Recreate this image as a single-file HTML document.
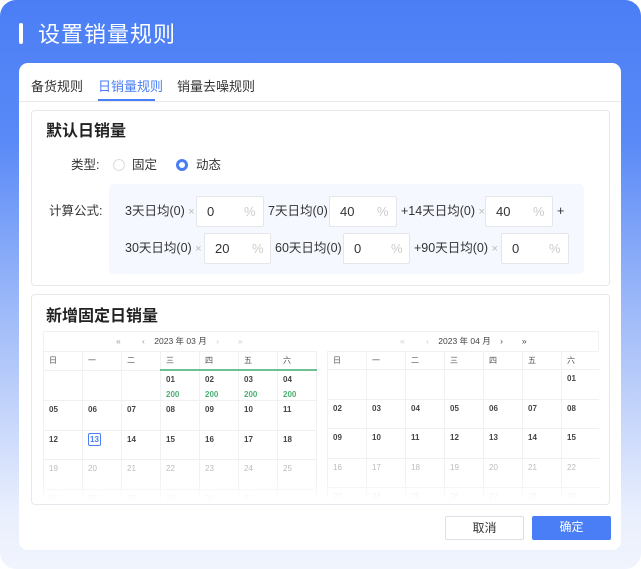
<!DOCTYPE html>
<html><head><meta charset="utf-8"><style>
*{margin:0;padding:0;box-sizing:border-box}
body{width:641px;height:569px;overflow:hidden;font-family:"Liberation Sans","Noto Sans CJK SC",sans-serif;background:#fff;position:relative}
.bg{position:absolute;left:0;top:0;width:641px;height:569px;border-radius:16px;background:linear-gradient(180deg,#4b7ef6 0%,#5a8af7 25%,#9fbaf9 55%,#e9effd 90%,#f1f4fd 100%)}
.abs{position:absolute}
.card{left:19px;top:63px;width:602px;height:487px;background:#fff;border-radius:9px}
.title{left:38px;top:21px;color:#fff;font-size:22px;letter-spacing:1px;line-height:28px}
.bar{left:19px;top:23px;width:4px;height:21px;background:#fff;border-radius:2px}
.tab{top:79px;font-size:13px;color:#333;line-height:16px}
.box{border:1px solid #e6e8ee;border-radius:4px;background:#fff}
.h{font-size:16px;font-weight:bold;color:#222;line-height:20px}
.t{font-size:12.5px;color:#333;white-space:nowrap;line-height:14px}
.inp{background:#fff;border:1px solid #e4e6eb;border-radius:2px;height:31px;font-size:13px;color:#333;line-height:15px}
.inp span{position:absolute;top:7px}
.x{color:#bbb;font-size:11px}
table{border-collapse:collapse;table-layout:fixed;position:absolute}
td{box-sizing:content-box;border:1px solid #f0f1f5;vertical-align:top;font-size:8px;line-height:10px;font-weight:bold;color:#444;padding:4px 5px 0;width:28px}
tr.w td{height:13px;font-weight:normal;color:#555}
tr.r td{height:24.5px}
tr.g td{color:#bbb;font-weight:normal}
tr.f td{color:#ddd;font-weight:normal}
.gr{color:#4caf73;display:block;margin-top:5px}
.hd{font-size:8.5px;color:#444;line-height:10px}
.btn{top:516px;width:79px;height:24px;border-radius:2px;font-size:12px;text-align:center;line-height:23px}
</style></head><body>
<div class="bg"></div>
<div class="abs bar"></div>
<div class="abs title">设置销量规则</div>
<div class="abs card"></div>
<div class="abs tab" style="left:31px">备货规则</div>
<div class="abs tab" style="left:98px;color:#4a7ef6">日销量规则</div>
<div class="abs tab" style="left:177px">销量去噪规则</div>
<div class="abs" style="left:19px;top:101px;width:602px;height:1px;background:#e8e9ee"></div>
<div class="abs" style="left:98px;top:99px;width:57px;height:2px;background:#4a7ef6"></div>

<div class="abs box" style="left:31px;top:110px;width:579px;height:176px"></div>
<div class="abs h" style="left:46px;top:122px">默认日销量</div>
<div class="abs t" style="left:71px;top:158px">类型:</div>
<div class="abs" style="left:113px;top:159px;width:12px;height:12px;border:1px solid #ddd;border-radius:50%"></div>
<div class="abs t" style="left:132px;top:158px">固定</div>
<div class="abs" style="left:176px;top:159px;width:12px;height:12px;border:3.5px solid #4a7ef6;border-radius:50%;background:#fff"></div>
<div class="abs t" style="left:196px;top:158px">动态</div>
<div class="abs t" style="left:49px;top:204px">计算公式:</div>
<div class="abs" style="left:109px;top:184px;width:475px;height:90px;background:#f5f8fe;border-radius:4px"></div>

<div class="abs t" style="left:125px;top:204px">3天日均(0) <span class="x">×</span></div>
<div class="abs inp" style="left:196px;top:196px;width:68px"><span style="left:10px">0</span><span style="left:47px;color:#ccc">%</span></div>
<div class="abs t" style="left:268px;top:204px">7天日均(0)</div>
<div class="abs inp" style="left:329px;top:196px;width:68px"><span style="left:10px">40</span><span style="left:47px;color:#ccc">%</span></div>
<div class="abs t" style="left:401px;top:204px">+14天日均(0) <span class="x">×</span></div>
<div class="abs inp" style="left:485px;top:196px;width:68px"><span style="left:10px">40</span><span style="left:47px;color:#ccc">%</span></div>
<div class="abs t" style="left:557px;top:204px">+</div>

<div class="abs t" style="left:125px;top:241px">30天日均(0) <span class="x">×</span></div>
<div class="abs inp" style="left:204px;top:233px;width:67px"><span style="left:10px">20</span><span style="left:47px;color:#ccc">%</span></div>
<div class="abs t" style="left:275px;top:241px">60天日均(0) <span class="x">×</span></div>
<div class="abs inp" style="left:343px;top:233px;width:67px"><span style="left:10px">0</span><span style="left:47px;color:#ccc">%</span></div>
<div class="abs t" style="left:414px;top:241px">+90天日均(0) <span class="x">×</span></div>
<div class="abs inp" style="left:501px;top:233px;width:68px"><span style="left:10px">0</span><span style="left:47px;color:#ccc">%</span></div>

<div class="abs box" style="left:31px;top:294px;width:579px;height:211px"></div>
<div class="abs h" style="left:46px;top:307px">新增固定日销量</div>
<div class="abs" style="left:43px;top:331px;width:556px;height:20px;border:1px solid #f0f1f5;border-bottom:none"></div>
<div class="abs hd" style="left:116px;top:336px;color:#999">«&nbsp;&nbsp;&nbsp;&nbsp;&nbsp;&nbsp;&nbsp;&nbsp;&nbsp;‹&nbsp;&nbsp;&nbsp;&nbsp;<span style="color:#444">2023 年 03 月</span>&nbsp;&nbsp;&nbsp;&nbsp;<span style="color:#ccc">›&nbsp;&nbsp;&nbsp;&nbsp;&nbsp;&nbsp;&nbsp;&nbsp;»</span></div>
<div class="abs hd" style="left:400px;top:336px;color:#ccc">«&nbsp;&nbsp;&nbsp;&nbsp;&nbsp;&nbsp;&nbsp;&nbsp;&nbsp;‹&nbsp;&nbsp;&nbsp;&nbsp;<span style="color:#444">2023 年 04 月</span>&nbsp;&nbsp;&nbsp;&nbsp;<span style="color:#444">›&nbsp;&nbsp;&nbsp;&nbsp;&nbsp;&nbsp;&nbsp;&nbsp;»</span></div>

<div class="abs" style="left:43px;top:351px;width:556px;height:150px;overflow:hidden">
<table style="left:0;top:0;width:271px">
<tr class="w"><td>日</td><td>一</td><td>二</td><td>三</td><td>四</td><td>五</td><td>六</td></tr>
<tr class="r"><td></td><td></td><td></td><td style="border-top:2px solid #6cc093">01<span class="gr">200</span></td><td style="border-top:2px solid #6cc093">02<span class="gr">200</span></td><td style="border-top:2px solid #6cc093">03<span class="gr">200</span></td><td style="border-top:2px solid #6cc093">04<span class="gr">200</span></td></tr>
<tr class="r"><td>05</td><td>06</td><td>07</td><td>08</td><td>09</td><td>10</td><td>11</td></tr>
<tr class="r"><td>12</td><td><span style="color:#4a7ef6;border:1px solid #4a7ef6;border-radius:2px;padding:1px 1px">13</span></td><td>14</td><td>15</td><td>16</td><td>17</td><td>18</td></tr>
<tr class="r g"><td>19</td><td>20</td><td>21</td><td>22</td><td>23</td><td>24</td><td>25</td></tr>
<tr class="r f"><td>26</td><td>27</td><td>28</td><td>29</td><td>30</td><td>31</td><td></td></tr>
</table>
<table style="left:284px;top:0;width:272px">
<tr class="w"><td>日</td><td>一</td><td>二</td><td>三</td><td>四</td><td>五</td><td>六</td></tr>
<tr class="r"><td></td><td></td><td></td><td></td><td></td><td></td><td>01</td></tr>
<tr class="r"><td>02</td><td>03</td><td>04</td><td>05</td><td>06</td><td>07</td><td>08</td></tr>
<tr class="r"><td>09</td><td>10</td><td>11</td><td>12</td><td>13</td><td>14</td><td>15</td></tr>
<tr class="r g"><td>16</td><td>17</td><td>18</td><td>19</td><td>20</td><td>21</td><td>22</td></tr>
<tr class="r f"><td>23</td><td>24</td><td>25</td><td>26</td><td>27</td><td>28</td><td>29</td></tr>
</table>
<div class="abs" style="left:0;top:130px;width:556px;height:20px;background:linear-gradient(rgba(255,255,255,0),#fff)"></div>
</div>

<div class="abs btn" style="left:445px;border:1px solid #dcdfe6;color:#333;background:#fff">取消</div>
<div class="abs btn" style="left:532px;background:#4a7ef6;color:#fff">确定</div>
</body></html>
